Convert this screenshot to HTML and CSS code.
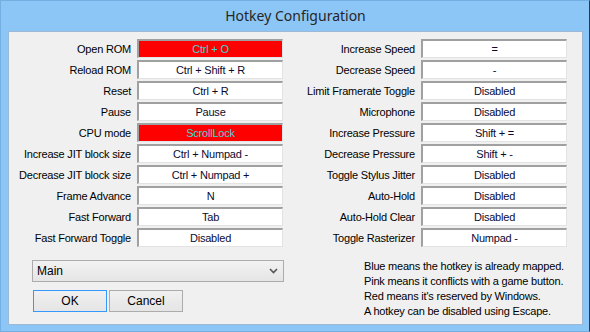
FILE: index.html
```html
<!DOCTYPE html>
<html lang="en">
<head>
    <meta charset="UTF-8">
    <title>Hotkey Configuration</title>
    <link rel="stylesheet" href="styles.css">
</head>
<body>
    <div class="window">
        <div class="titlebar">Hotkey Configuration</div>
        <div class="client">
            <div class="columns">
                <div class="keys keys-left">
                    <label>Open ROM</label><div class="field reserved">Ctrl + O</div>
                    <label>Reload ROM</label><div class="field">Ctrl + Shift + R</div>
                    <label>Reset</label><div class="field">Ctrl + R</div>
                    <label>Pause</label><div class="field">Pause</div>
                    <label>CPU mode</label><div class="field reserved">ScrollLock</div>
                    <label>Increase JIT block size</label><div class="field">Ctrl + Numpad -</div>
                    <label>Decrease JIT block size</label><div class="field">Ctrl + Numpad +</div>
                    <label>Frame Advance</label><div class="field">N</div>
                    <label>Fast Forward</label><div class="field">Tab</div>
                    <label>Fast Forward Toggle</label><div class="field">Disabled</div>
                </div>
                <div class="keys keys-right">
                    <label>Increase Speed</label><div class="field">=</div>
                    <label>Decrease Speed</label><div class="field">-</div>
                    <label>Limit Framerate Toggle</label><div class="field">Disabled</div>
                    <label>Microphone</label><div class="field">Disabled</div>
                    <label>Increase Pressure</label><div class="field">Shift + =</div>
                    <label>Decrease Pressure</label><div class="field">Shift + -</div>
                    <label>Toggle Stylus Jitter</label><div class="field">Disabled</div>
                    <label>Auto-Hold</label><div class="field">Disabled</div>
                    <label>Auto-Hold Clear</label><div class="field">Disabled</div>
                    <label>Toggle Rasterizer</label><div class="field">Numpad -</div>
                </div>
            </div>
            <div class="bottom">
                <div class="controls">
                    <div class="combo">
                        <span>Main</span>
                        <svg width="9" height="6" viewBox="0 0 9 6"><path d="M1 1 L4.5 4.5 L8 1" fill="none" stroke="#555" stroke-width="1.6"/></svg>
                    </div>
                    <div class="buttons">
                        <div class="btn btn-default">OK</div>
                        <div class="btn">Cancel</div>
                    </div>
                </div>
                <div class="help">
                    Blue means the hotkey is already mapped.<br>
                    Pink means it conflicts with a game button.<br>
                    Red means it's reserved by Windows.<br>
                    A hotkey can be disabled using Escape.
                </div>
            </div>
        </div>
    </div>
</body>
</html>
```

FILE: styles.css
```css
body {
    margin: 0;
    font-family: "Liberation Sans", Arial, sans-serif;
    font-size: 11px;
    letter-spacing: -0.2px;
    color: #000;
}
.window {
    width: 590px;
    height: 332px;
    box-sizing: border-box;
    background-color: #8cc6f7;
    border: 1px solid #74afe3;
    border-right-color: #1d3b66;
    padding: 0 6px 6px 7px;
    display: flex;
    flex-direction: column;
}
.titlebar {
    height: 30px;
    line-height: 30px;
    text-align: center;
    font-family: "Noto Sans", "Open Sans", sans-serif;
    font-size: 14px;
    letter-spacing: 0;
    color: #262626;
}
.client {
    flex: 1;
    background-color: #f0f0f0;
    border: 1px solid #9db8d4;
    padding: 7px 0 0 0;
}
.columns {
    display: flex;
    gap: 8px;
}
.keys {
    display: grid;
    grid-template-columns: 122px 146px;
    column-gap: 6px;
    row-gap: 2px;
    align-items: center;
}
.keys-right {
    grid-template-columns: 124px 146px;
}
.keys label {
    text-align: right;
    white-space: nowrap;
}
.field {
    height: 19px;
    box-sizing: border-box;
    background-color: #fff;
    border-top: 2px solid #a0a0a0;
    border-left: 2px solid #a0a0a0;
    border-right: 1px solid #e3e3e3;
    border-bottom: 1px solid #e3e3e3;
    text-align: center;
    line-height: 16px;
    color: #0b0b30;
}
.field.reserved {
    background-color: #ff0000;
    color: #3ad8d8;
}
.bottom {
    display: flex;
    margin-top: 13px;
}
.controls {
    margin-left: 23px;
    width: 252px;
}
.combo {
    height: 22px;
    box-sizing: border-box;
    border: 1px solid #acacac;
    background: linear-gradient(#f2f2f2, #e5e5e5);
    display: flex;
    align-items: center;
    justify-content: space-between;
    padding: 0 5px 0 4px;
    font-size: 12px;
    letter-spacing: 0;
}
.buttons {
    display: flex;
    gap: 2px;
    margin-top: 8px;
    margin-left: 1px;
}
.btn {
    width: 74px;
    height: 22px;
    box-sizing: border-box;
    border: 1px solid #acacac;
    background: linear-gradient(#f0f0f0, #e5e5e5);
    text-align: center;
    line-height: 20px;
    font-size: 12px;
    letter-spacing: 0;
}
.btn-default {
    border-color: #3399ff;
}
.help {
    margin-left: 80px;
    margin-top: -1px;
    line-height: 15px;
    font-size: 11px;
    color: #000;
}
```
